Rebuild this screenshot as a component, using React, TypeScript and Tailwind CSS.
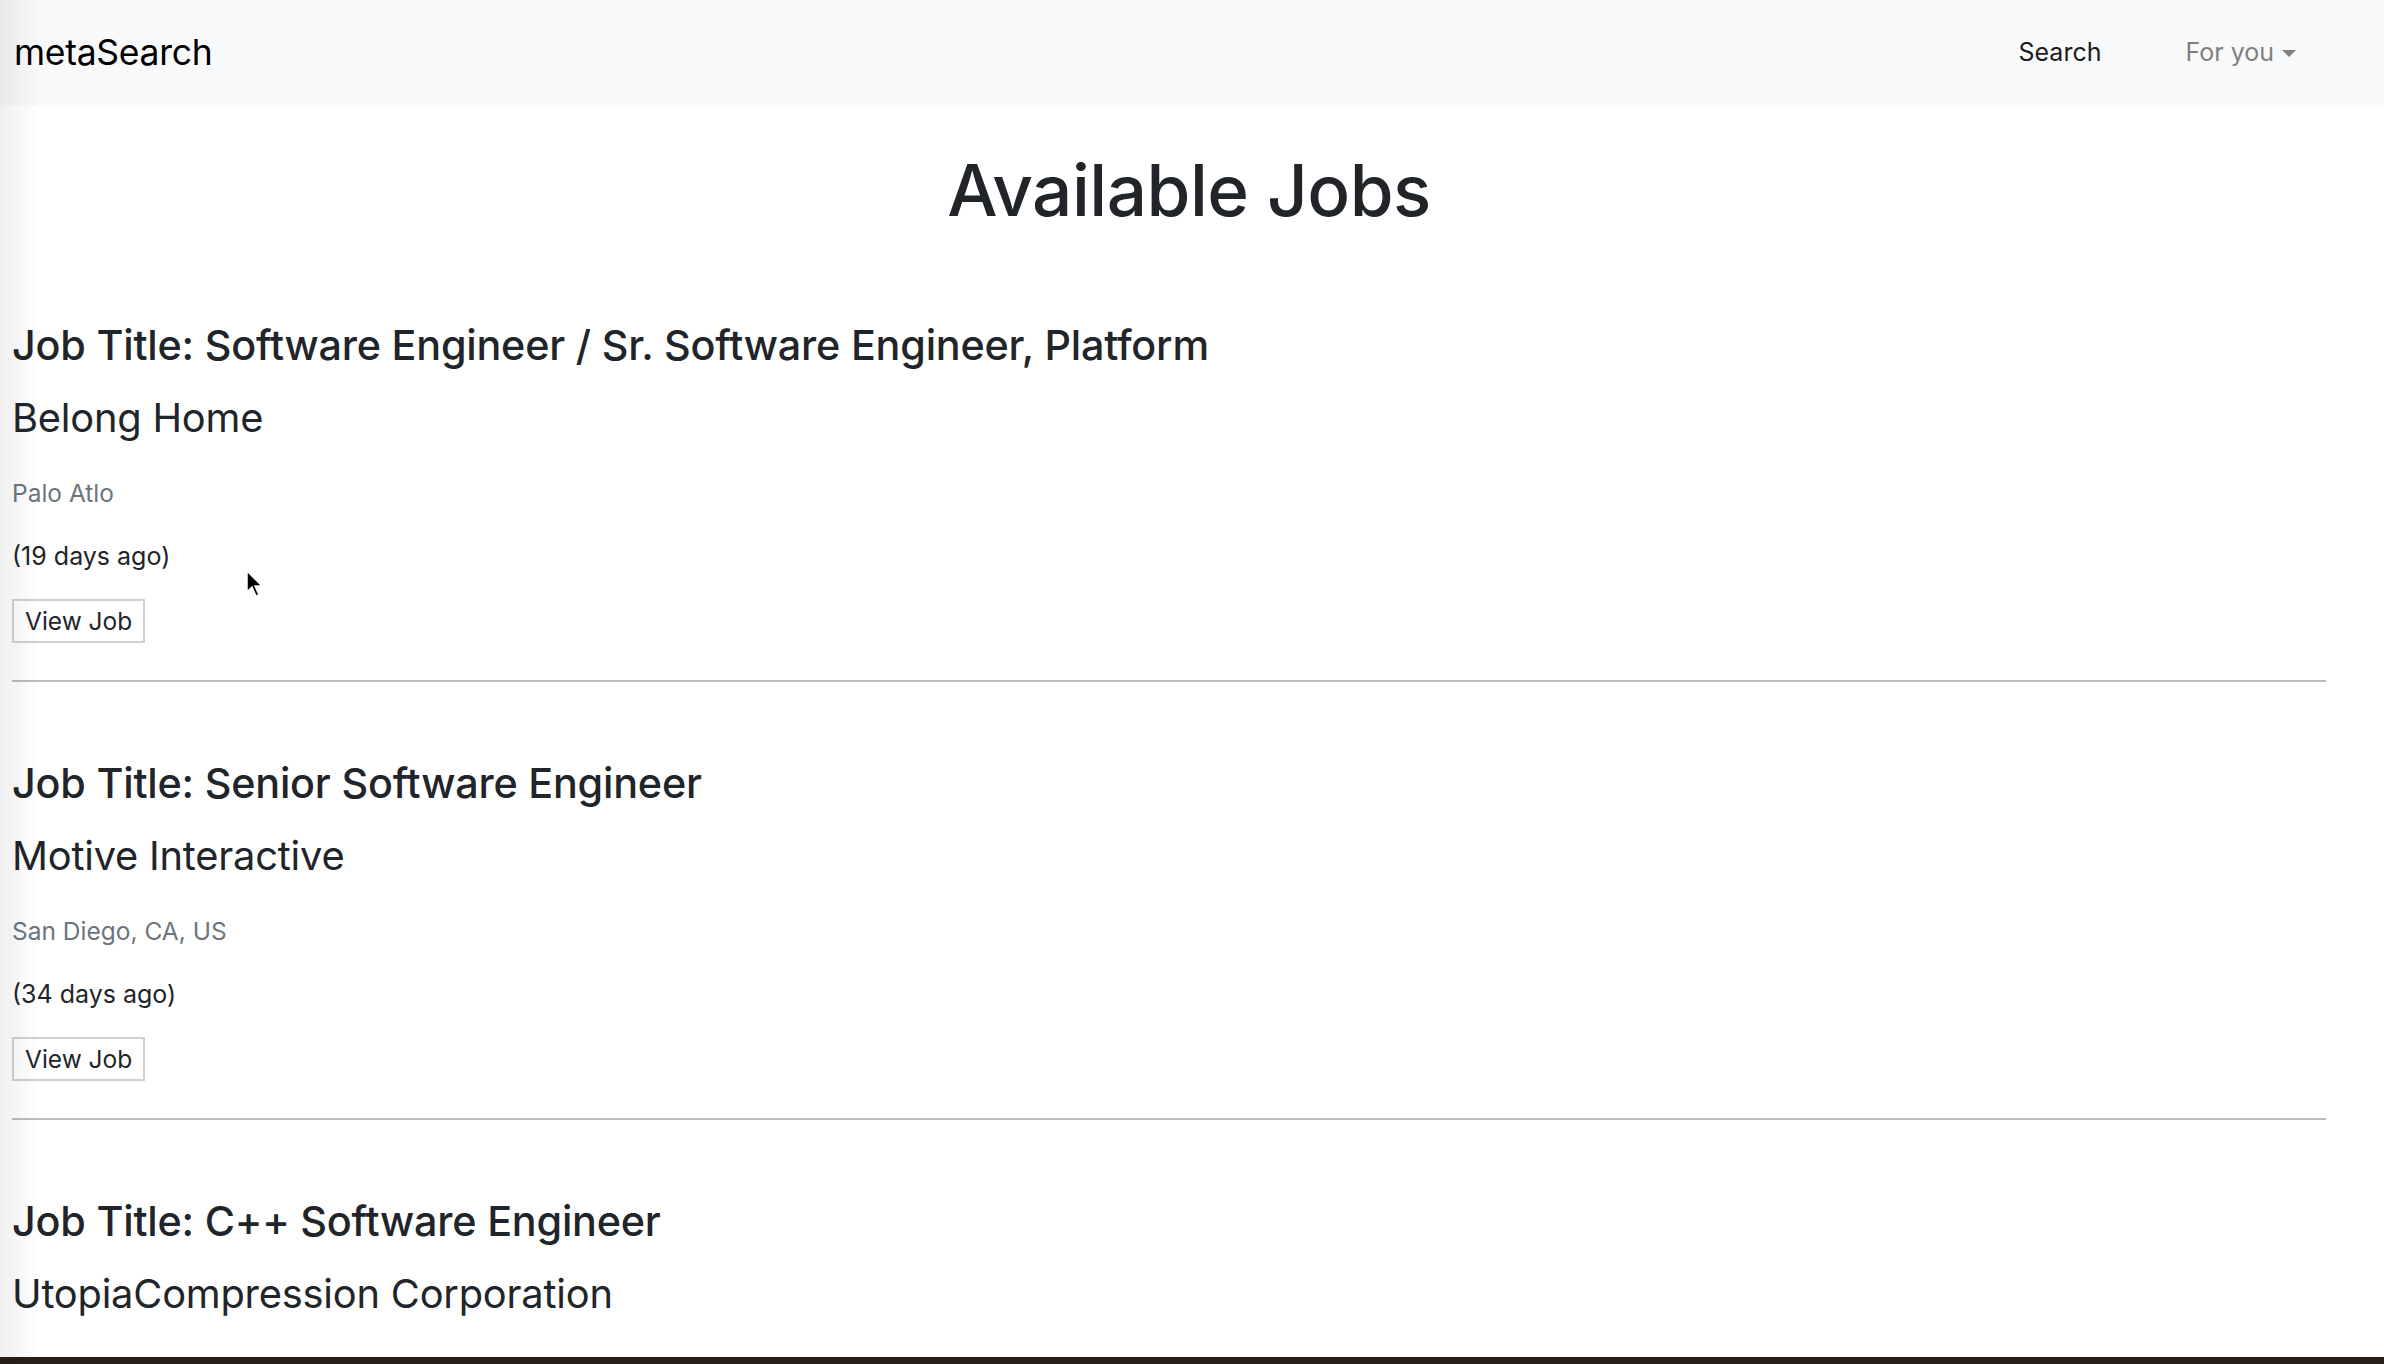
import React from "react";

type Job = { title: string; company: string; location: string; ago: string };

const jobs: Job[] = [
  { title: "Software Engineer / Sr. Software Engineer, Platform", company: "Belong Home", location: "Palo Atlo", ago: "(19 days ago)" },
  { title: "Senior Software Engineer", company: "Motive Interactive", location: "San Diego, CA, US", ago: "(34 days ago)" },
  { title: "C++ Software Engineer", company: "UtopiaCompression Corporation", location: "Palo Alto, CA, US", ago: "(41 days ago)" },
];

function JobItem({ job, last }: { job: Job; last: boolean }) {
  return (
    <div>
      <h3 className="h-[50px] text-[41.3px] leading-[50px] font-medium text-[#212529] whitespace-nowrap tracking-[-0.2px]">
        Job Title: {job.title}
      </h3>
      <h4 className="mt-[26px] h-[44px] text-[39.8px] leading-[44px] font-normal text-[#212529] whitespace-nowrap tracking-[-0.2px]">
        {job.company}
      </h4>
      <h6 className="mt-[37px] h-[32px] text-[24.5px] leading-[32px] text-[#6c757d]">{job.location}</h6>
      <p className="mt-[31px] h-[32px] text-[25px] leading-[32px] text-[#212529]">{job.ago}</p>
      <button className="mt-[27px] h-[44px] px-[11px] border-2 border-[#d0d0d0] bg-white text-[24.5px] leading-[40px] text-[#212529]">
        View Job
      </button>
      {!last && <div className="mt-[37px] border-t-2 border-[#bdbdbd] mb-[76px]" />}
    </div>
  );
}

export default function App() {
  return (
    <div
      className="relative h-[1364px] w-full overflow-hidden bg-white flex flex-col"
      style={{ fontFamily: "Inter, 'Liberation Sans', sans-serif" }}
    >
      <nav className="h-[105px] shrink-0 bg-[#f8f9fa] flex items-center pl-[14px] pr-[88px]">
        <span className="text-[35.5px] text-black tracking-[-0.3px]">metaSearch</span>
        <div className="ml-auto flex items-center gap-[84px]">
          <span className="text-[25px] text-[#1c1c1c]">Search</span>
          <span className="flex items-center text-[25px] text-[#808080]">
            For you
            <span className="ml-[8px] mt-[2px] w-0 h-0 border-l-[7px] border-r-[7px] border-t-[7px] border-l-transparent border-r-transparent border-t-[#808080]" />
          </span>
        </div>
      </nav>
      <div className="flex-1 overflow-hidden">
        <h1 className="mt-[42px] pr-[6px] text-center text-[71px] leading-[86px] font-medium text-[#212529] tracking-[-0.5px]">
          Available Jobs
        </h1>
        <div className="mt-[87px] pl-[12px] pr-[58px]">
          {jobs.map((j, i) => (
            <JobItem key={i} job={j} last={i === jobs.length - 1} />
          ))}
        </div>
      </div>
      <div className="h-[7px] shrink-0 bg-[#2a1f18]" />
      <div className="pointer-events-none absolute left-0 top-0 bottom-0 w-[40px] bg-gradient-to-r from-[#00000010] to-transparent" />
      <svg className="pointer-events-none absolute left-[246px] top-[570px]" width="18" height="28" viewBox="0 0 18 28">
        <path d="M1 1 L1 22 L6 17 L10 26 L13 25 L9 16 L16 16 Z" fill="#000" stroke="#fff" strokeWidth="1.5" />
      </svg>
    </div>
  );
}
